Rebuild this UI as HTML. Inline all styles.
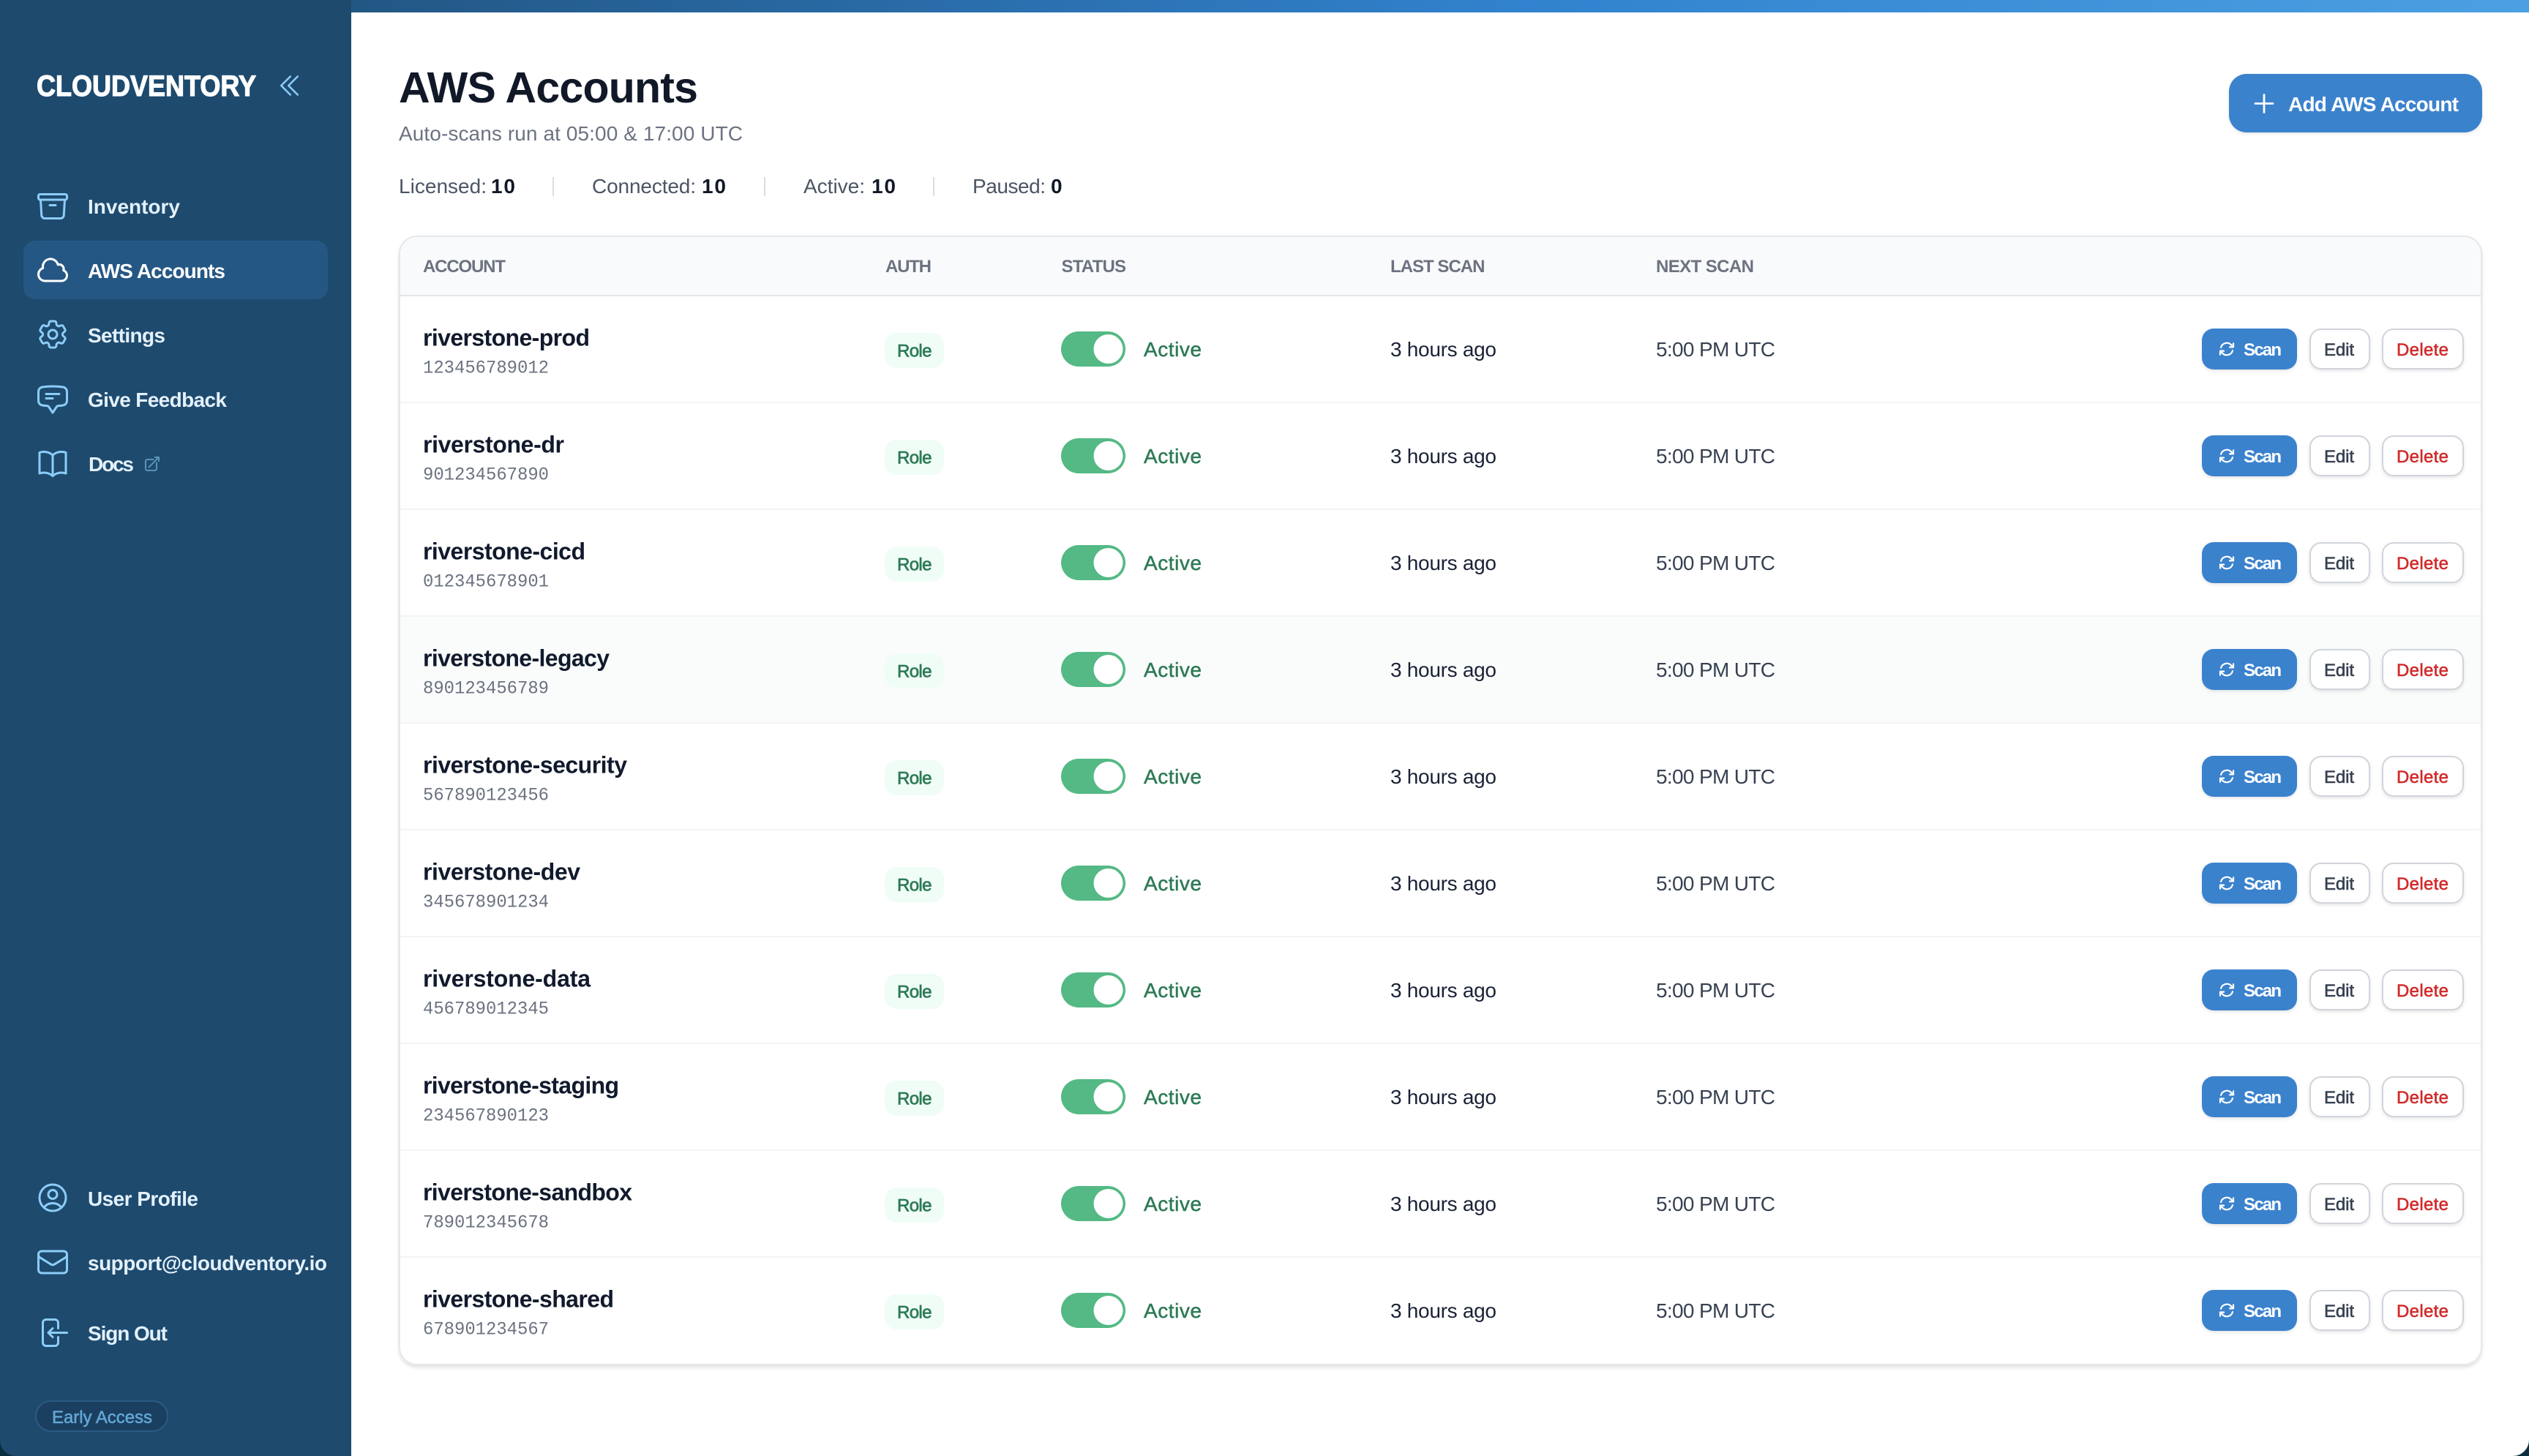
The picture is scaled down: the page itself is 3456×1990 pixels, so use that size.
<!DOCTYPE html>
<html lang="en">
<head>
<meta charset="utf-8">
<title>AWS Accounts</title>
<style>
html,body{margin:0;padding:0;background:#fff;width:3456px;height:1990px;overflow:hidden}
svg{display:block}
text{font-family:"Liberation Sans",sans-serif;white-space:pre}
.nav{font-size:28px;font-weight:700;fill:#e3f1fc}
.ic{fill:none;stroke:#8ccdf8;stroke-width:1.5;stroke-linecap:round;stroke-linejoin:round}
.stat{font-size:28px;fill:#4b5563}
.statb{font-size:28px;font-weight:700;fill:#111827}
.th{font-size:24px;font-weight:700;fill:#6b7280}
.nm{font-size:32px;font-weight:700;fill:#111a2c}
.id{font-family:"Liberation Mono",monospace;font-size:25px;fill:#6b7280}
.role{font-size:24px;font-weight:400;fill:#2d7a55;stroke:#2d7a55;stroke-width:.7}
.act{font-size:28px;fill:#2d7a55;stroke:#2d7a55;stroke-width:.5}
.ls{font-size:28px;fill:#1a2236}
.nx{font-size:28px;fill:#374151}
.sc{font-size:24px;font-weight:700;fill:#fff}
.ed{font-size:24px;fill:#374151;stroke:#374151;stroke-width:.6}
.de{font-size:24px;fill:#d12a2a;stroke:#d12a2a;stroke-width:.6}
</style>
</head>
<body>
<svg xmlns="http://www.w3.org/2000/svg" width="3456" height="1990" viewBox="0 0 3456 1990">
<defs>
<linearGradient id="bar" x1="0" y1="0" x2="3456" y2="0" gradientUnits="userSpaceOnUse">
<stop offset="0" stop-color="#1e4a6e"/><stop offset=".6" stop-color="#3182ce"/><stop offset="1" stop-color="#4ba0e2"/>
</linearGradient>
<filter id="sh" x="-10%" y="-20%" width="120%" height="150%"><feDropShadow dx="0" dy="2" stdDeviation="2" flood-color="#000" flood-opacity=".1"/></filter>
<filter id="sc" x="-2%" y="-2%" width="104%" height="104%"><feDropShadow dx="0" dy="3" stdDeviation="2.5" flood-color="#000" flood-opacity=".12"/></filter>
<g id="rs">
<rect x="1209" y="455" width="81" height="48" rx="16" fill="#f0fdf7"/>
<rect x="1450" y="453" width="88" height="48" rx="24" fill="#54b984"/>
<circle cx="1514.5" cy="477" r="20" fill="#fff"/>
<rect x="3009" y="449" width="130" height="56" rx="16" fill="#3b82cd" filter="url(#sh)"/>
<path transform="translate(3031,465)" d="M16.023 9.348h4.992v-.001M2.985 19.644v-4.992m0 0h4.992m-4.993 0l3.181 3.183a8.25 8.25 0 0013.803-3.7M4.031 9.865a8.25 8.25 0 0113.803-3.7l3.181 3.182m0-4.991v4.99" fill="none" stroke="#fff" stroke-width="2.2" stroke-linecap="round" stroke-linejoin="round"/>
<rect x="3157" y="450" width="81" height="54" rx="15" fill="#fff" stroke="#d1d5db" stroke-width="2" filter="url(#sh)"/>
<rect x="3256" y="450" width="110" height="54" rx="15" fill="#fff" stroke="#d1d5db" stroke-width="2" filter="url(#sh)"/>
</g>
</defs>

<rect width="3456" height="1990" fill="#fff"/>
<rect width="3456" height="17" fill="url(#bar)"/>
<rect width="480" height="1990" fill="#1e4a6e"/>

<!-- sidebar -->
<text x="50" y="131" font-size="40" font-weight="700" fill="#fff" stroke="#fff" stroke-width="1.2" textLength="300" lengthAdjust="spacingAndGlyphs">CLOUDVENTORY</text>
<path transform="translate(375.5,97) scale(1.667)" class="ic" d="M18.75 19.5l-7.5-7.5 7.5-7.5m-6 15L5.25 12l7.5-7.5"/>

<rect x="32" y="329" width="416" height="80" rx="16" fill="#255785"/>

<path transform="translate(48,258) scale(2)" class="ic" d="M20.25 7.5l-.625 10.632a2.25 2.25 0 01-2.247 2.118H6.622a2.25 2.25 0 01-2.247-2.118L3.75 7.5M10 11.25h4M3.375 7.5h17.25c.621 0 1.125-.504 1.125-1.125v-1.5c0-.621-.504-1.125-1.125-1.125H3.375c-.621 0-1.125.504-1.125 1.125v1.5c0 .621.504 1.125 1.125 1.125z"/>
<text class="nav" x="120" y="292" textLength="126">Inventory</text>

<path transform="translate(48,345) scale(2)" class="ic" style="stroke:#fff" d="M2.25 15a4.5 4.5 0 004.5 4.5H18a3.75 3.75 0 001.332-7.257 3 3 0 00-3.758-3.848 5.25 5.25 0 00-10.233 2.33A4.502 4.502 0 002.25 15z"/>
<text class="nav" x="120" y="380" textLength="188" style="fill:#fff">AWS Accounts</text>

<path transform="translate(48,433) scale(2)" class="ic" d="M9.594 3.94c.09-.542.56-.94 1.11-.94h2.593c.55 0 1.02.398 1.11.94l.213 1.281c.063.374.313.686.645.87.074.04.147.083.22.127.324.196.72.257 1.075.124l1.217-.456a1.125 1.125 0 011.37.49l1.296 2.247a1.125 1.125 0 01-.26 1.431l-1.003.827c-.293.24-.438.613-.431.992a6.759 6.759 0 010 .255c-.007.378.138.75.43.99l1.005.828c.424.35.534.954.26 1.43l-1.298 2.247a1.125 1.125 0 01-1.369.491l-1.217-.456c-.355-.133-.75-.072-1.076.124a6.57 6.57 0 01-.22.128c-.331.183-.581.495-.644.869l-.213 1.28c-.09.543-.56.941-1.11.941h-2.594c-.55 0-1.02-.398-1.11-.94l-.213-1.281c-.062-.374-.312-.686-.644-.87a6.52 6.52 0 01-.22-.127c-.325-.196-.72-.257-1.076-.124l-1.217.456a1.125 1.125 0 01-1.369-.49l-1.297-2.247a1.125 1.125 0 01.26-1.431l1.004-.827c.292-.24.437-.613.43-.992a6.932 6.932 0 010-.255c.007-.378-.138-.75-.43-.99l-1.004-.828a1.125 1.125 0 01-.26-1.43l1.297-2.247a1.125 1.125 0 011.37-.491l1.216.456c.356.133.751.072 1.076-.124.072-.044.146-.087.22-.128.332-.183.582-.495.644-.869l.214-1.281zM15 12a3 3 0 11-6 0 3 3 0 016 0z"/>
<text class="nav" x="120" y="468" textLength="106">Settings</text>

<path transform="translate(48,522) scale(2)" class="ic" d="M7.5 8.25h9m-9 3H12m-9.75 1.51c0 1.6 1.123 2.994 2.707 3.227 1.129.166 2.27.293 3.423.379.35.026.67.21.865.501L12 21l2.755-4.133a1.14 1.14 0 01.865-.501 48.172 48.172 0 003.423-.379c1.584-.233 2.707-1.626 2.707-3.228V6.741c0-1.602-1.123-2.995-2.707-3.228A48.394 48.394 0 0012 3c-2.392 0-4.744.175-7.043.513C3.373 3.746 2.25 5.14 2.25 6.741v6.018z"/>
<text class="nav" x="120" y="556" textLength="190">Give Feedback</text>

<path transform="translate(48,610) scale(2)" class="ic" d="M12 6.042A8.967 8.967 0 006 3.75c-1.052 0-2.062.18-3 .512v14.25A8.987 8.987 0 016 18c2.305 0 4.408.867 6 2.292m0-14.25a8.966 8.966 0 016-2.292c1.052 0 2.062.18 3 .512v14.25A8.987 8.987 0 0018 18a8.967 8.967 0 00-6 2.292m0-14.25v14.25"/>
<text class="nav" x="121" y="644" textLength="62">Docs</text>
<path transform="translate(196,622)" d="M13.5 6H5.25A2.25 2.25 0 003 8.25v10.5A2.25 2.25 0 005.25 21h10.5A2.25 2.25 0 0018 18.75V10.5m-10.5 6L21 3m0 0h-5.25M21 3v5.25" fill="none" stroke="#8ccdf8" stroke-opacity=".55" stroke-width="2" stroke-linecap="round" stroke-linejoin="round"/>

<path transform="translate(48,1613) scale(2)" class="ic" d="M17.982 18.725A7.488 7.488 0 0012 15.75a7.488 7.488 0 00-5.982 2.975m11.963 0a9 9 0 10-11.963 0m11.963 0A8.966 8.966 0 0112 21a8.966 8.966 0 01-5.982-2.275M15 9.75a3 3 0 11-6 0 3 3 0 016 0z"/>
<text class="nav" x="120" y="1648" textLength="151">User Profile</text>

<path transform="translate(48,1701) scale(2)" class="ic" d="M21.75 6.75v10.5a2.25 2.25 0 01-2.25 2.25h-15a2.25 2.25 0 01-2.25-2.25V6.75m19.5 0A2.25 2.25 0 0019.5 4.5h-15a2.25 2.25 0 00-2.25 2.25m19.5 0v.243a2.25 2.25 0 01-1.07 1.916l-7.5 4.615a2.25 2.25 0 01-2.36 0L3.32 8.91a2.25 2.25 0 01-1.07-1.916V6.75"/>
<text class="nav" x="120" y="1736" textLength="327">support@cloudventory.io</text>

<path transform="translate(48,1797.5) scale(2)" class="ic" d="M15.75 9V5.25A2.25 2.25 0 0013.5 3h-6a2.25 2.25 0 00-2.25 2.25v13.5A2.25 2.25 0 007.5 21h6a2.25 2.25 0 002.25-2.25V15M12 9l-3 3m0 0l3 3m-3-3h12.75"/>
<text class="nav" x="120" y="1832" textLength="109">Sign Out</text>

<rect x="49" y="1915" width="180" height="41" rx="20.5" fill="#1b3f60" stroke="#2b5a85" stroke-width="2"/>
<text x="71" y="1945" font-size="24" fill="#63a8d6" stroke="#63a8d6" stroke-width=".5" textLength="137">Early Access</text>

<!-- corners -->
<path d="M0 1968A22 22 0 0 0 22 1990H0Z" fill="#0a3040"/>
<path d="M3456 1968A22 22 0 0 1 3434 1990H3456Z" fill="#0a3040"/>

<!-- header -->
<text x="545" y="140" font-size="59" font-weight="700" fill="#111827" textLength="409">AWS Accounts</text>
<text x="545" y="192" font-size="28" fill="#6b7280" textLength="470">Auto-scans run at 05:00 &amp; 17:00 UTC</text>

<text class="stat" x="545" y="264" textLength="120">Licensed:</text>
<text class="statb" x="671" y="264" textLength="33">10</text>
<rect x="755" y="242" width="2" height="26" fill="#d9dde3"/>
<text class="stat" x="809" y="264" textLength="142">Connected:</text>
<text class="statb" x="959" y="264" textLength="33">10</text>
<rect x="1044" y="242" width="2" height="26" fill="#d9dde3"/>
<text class="stat" x="1098" y="264" textLength="84">Active:</text>
<text class="statb" x="1191" y="264" textLength="33">10</text>
<rect x="1275" y="242" width="2" height="26" fill="#d9dde3"/>
<text class="stat" x="1329" y="264" textLength="100">Paused:</text>
<text class="statb" x="1436" y="264" textLength="16">0</text>

<rect x="3046" y="101" width="346" height="80" rx="24" fill="#3b82cd" filter="url(#sh)"/>
<path d="M3094 129.5v24M3082 141.5h24" stroke="#fff" stroke-width="2.8" stroke-linecap="round" fill="none"/>
<text x="3127" y="152" font-size="28" font-weight="700" fill="#fff" textLength="233">Add AWS Account</text>

<!-- card -->
<rect x="546" y="323" width="2845" height="1542" rx="24" fill="#fff" stroke="#e5e7eb" stroke-width="2" filter="url(#sc)"/>
<path d="M547 403V347A23 23 0 0 1 570 324H3367A23 23 0 0 1 3390 347V403Z" fill="#f9fafb"/>
<rect x="547" y="403" width="2843" height="2" fill="#e5e7eb"/>
<rect x="547" y="843" width="2843" height="144" fill="#fafcfc"/>
<rect x="547" y="549" width="2843" height="2" fill="#f3f4f6"/>
<rect x="547" y="695" width="2843" height="2" fill="#f3f4f6"/>
<rect x="547" y="841" width="2843" height="2" fill="#f3f4f6"/>
<rect x="547" y="987" width="2843" height="2" fill="#f3f4f6"/>
<rect x="547" y="1133" width="2843" height="2" fill="#f3f4f6"/>
<rect x="547" y="1279" width="2843" height="2" fill="#f3f4f6"/>
<rect x="547" y="1425" width="2843" height="2" fill="#f3f4f6"/>
<rect x="547" y="1571" width="2843" height="2" fill="#f3f4f6"/>
<rect x="547" y="1717" width="2843" height="2" fill="#f3f4f6"/>

<text class="th" x="578" y="372" textLength="113">ACCOUNT</text>
<text class="th" x="1210" y="372" textLength="63">AUTH</text>
<text class="th" x="1450.5" y="372" textLength="88.5">STATUS</text>
<text class="th" x="1900" y="372" textLength="129.5">LAST SCAN</text>
<text class="th" x="2263" y="372" textLength="134">NEXT SCAN</text>

<!-- rows -->
<g>
<use href="#rs"/>
<text class="nm" x="578" y="472.5" textLength="228">riverstone-prod</text>
<text class="id" x="578" y="509.5" textLength="172" lengthAdjust="spacingAndGlyphs">123456789012</text>
<text class="role" x="1226" y="487.5" textLength="47.5">Role</text>
<text class="act" x="1563" y="487" textLength="79">Active</text>
<text class="ls" x="1900" y="487" textLength="145">3 hours ago</text>
<text class="nx" x="2263" y="487" textLength="163">5:00 PM UTC</text>
<text class="sc" x="3066" y="486" textLength="52">Scan</text>
<text class="ed" x="3176" y="486" textLength="41">Edit</text>
<text class="de" x="3275" y="486" textLength="71">Delete</text>
</g>
<g transform="translate(0,146)">
<use href="#rs"/>
<text class="nm" x="578" y="472.5" textLength="193">riverstone-dr</text>
<text class="id" x="578" y="509.5" textLength="172" lengthAdjust="spacingAndGlyphs">901234567890</text>
<text class="role" x="1226" y="487.5" textLength="47.5">Role</text>
<text class="act" x="1563" y="487" textLength="79">Active</text>
<text class="ls" x="1900" y="487" textLength="145">3 hours ago</text>
<text class="nx" x="2263" y="487" textLength="163">5:00 PM UTC</text>
<text class="sc" x="3066" y="486" textLength="52">Scan</text>
<text class="ed" x="3176" y="486" textLength="41">Edit</text>
<text class="de" x="3275" y="486" textLength="71">Delete</text>
</g>
<g transform="translate(0,292)">
<use href="#rs"/>
<text class="nm" x="578" y="472.5" textLength="222">riverstone-cicd</text>
<text class="id" x="578" y="509.5" textLength="172" lengthAdjust="spacingAndGlyphs">012345678901</text>
<text class="role" x="1226" y="487.5" textLength="47.5">Role</text>
<text class="act" x="1563" y="487" textLength="79">Active</text>
<text class="ls" x="1900" y="487" textLength="145">3 hours ago</text>
<text class="nx" x="2263" y="487" textLength="163">5:00 PM UTC</text>
<text class="sc" x="3066" y="486" textLength="52">Scan</text>
<text class="ed" x="3176" y="486" textLength="41">Edit</text>
<text class="de" x="3275" y="486" textLength="71">Delete</text>
</g>
<g transform="translate(0,438)">
<use href="#rs"/>
<text class="nm" x="578" y="472.5" textLength="255">riverstone-legacy</text>
<text class="id" x="578" y="509.5" textLength="172" lengthAdjust="spacingAndGlyphs">890123456789</text>
<text class="role" x="1226" y="487.5" textLength="47.5">Role</text>
<text class="act" x="1563" y="487" textLength="79">Active</text>
<text class="ls" x="1900" y="487" textLength="145">3 hours ago</text>
<text class="nx" x="2263" y="487" textLength="163">5:00 PM UTC</text>
<text class="sc" x="3066" y="486" textLength="52">Scan</text>
<text class="ed" x="3176" y="486" textLength="41">Edit</text>
<text class="de" x="3275" y="486" textLength="71">Delete</text>
</g>
<g transform="translate(0,584)">
<use href="#rs"/>
<text class="nm" x="578" y="472.5" textLength="279">riverstone-security</text>
<text class="id" x="578" y="509.5" textLength="172" lengthAdjust="spacingAndGlyphs">567890123456</text>
<text class="role" x="1226" y="487.5" textLength="47.5">Role</text>
<text class="act" x="1563" y="487" textLength="79">Active</text>
<text class="ls" x="1900" y="487" textLength="145">3 hours ago</text>
<text class="nx" x="2263" y="487" textLength="163">5:00 PM UTC</text>
<text class="sc" x="3066" y="486" textLength="52">Scan</text>
<text class="ed" x="3176" y="486" textLength="41">Edit</text>
<text class="de" x="3275" y="486" textLength="71">Delete</text>
</g>
<g transform="translate(0,730)">
<use href="#rs"/>
<text class="nm" x="578" y="472.5" textLength="215">riverstone-dev</text>
<text class="id" x="578" y="509.5" textLength="172" lengthAdjust="spacingAndGlyphs">345678901234</text>
<text class="role" x="1226" y="487.5" textLength="47.5">Role</text>
<text class="act" x="1563" y="487" textLength="79">Active</text>
<text class="ls" x="1900" y="487" textLength="145">3 hours ago</text>
<text class="nx" x="2263" y="487" textLength="163">5:00 PM UTC</text>
<text class="sc" x="3066" y="486" textLength="52">Scan</text>
<text class="ed" x="3176" y="486" textLength="41">Edit</text>
<text class="de" x="3275" y="486" textLength="71">Delete</text>
</g>
<g transform="translate(0,876)">
<use href="#rs"/>
<text class="nm" x="578" y="472.5" textLength="229">riverstone-data</text>
<text class="id" x="578" y="509.5" textLength="172" lengthAdjust="spacingAndGlyphs">456789012345</text>
<text class="role" x="1226" y="487.5" textLength="47.5">Role</text>
<text class="act" x="1563" y="487" textLength="79">Active</text>
<text class="ls" x="1900" y="487" textLength="145">3 hours ago</text>
<text class="nx" x="2263" y="487" textLength="163">5:00 PM UTC</text>
<text class="sc" x="3066" y="486" textLength="52">Scan</text>
<text class="ed" x="3176" y="486" textLength="41">Edit</text>
<text class="de" x="3275" y="486" textLength="71">Delete</text>
</g>
<g transform="translate(0,1022)">
<use href="#rs"/>
<text class="nm" x="578" y="472.5" textLength="268">riverstone-staging</text>
<text class="id" x="578" y="509.5" textLength="172" lengthAdjust="spacingAndGlyphs">234567890123</text>
<text class="role" x="1226" y="487.5" textLength="47.5">Role</text>
<text class="act" x="1563" y="487" textLength="79">Active</text>
<text class="ls" x="1900" y="487" textLength="145">3 hours ago</text>
<text class="nx" x="2263" y="487" textLength="163">5:00 PM UTC</text>
<text class="sc" x="3066" y="486" textLength="52">Scan</text>
<text class="ed" x="3176" y="486" textLength="41">Edit</text>
<text class="de" x="3275" y="486" textLength="71">Delete</text>
</g>
<g transform="translate(0,1168)">
<use href="#rs"/>
<text class="nm" x="578" y="472.5" textLength="286">riverstone-sandbox</text>
<text class="id" x="578" y="509.5" textLength="172" lengthAdjust="spacingAndGlyphs">789012345678</text>
<text class="role" x="1226" y="487.5" textLength="47.5">Role</text>
<text class="act" x="1563" y="487" textLength="79">Active</text>
<text class="ls" x="1900" y="487" textLength="145">3 hours ago</text>
<text class="nx" x="2263" y="487" textLength="163">5:00 PM UTC</text>
<text class="sc" x="3066" y="486" textLength="52">Scan</text>
<text class="ed" x="3176" y="486" textLength="41">Edit</text>
<text class="de" x="3275" y="486" textLength="71">Delete</text>
</g>
<g transform="translate(0,1314)">
<use href="#rs"/>
<text class="nm" x="578" y="472.5" textLength="261">riverstone-shared</text>
<text class="id" x="578" y="509.5" textLength="172" lengthAdjust="spacingAndGlyphs">678901234567</text>
<text class="role" x="1226" y="487.5" textLength="47.5">Role</text>
<text class="act" x="1563" y="487" textLength="79">Active</text>
<text class="ls" x="1900" y="487" textLength="145">3 hours ago</text>
<text class="nx" x="2263" y="487" textLength="163">5:00 PM UTC</text>
<text class="sc" x="3066" y="486" textLength="52">Scan</text>
<text class="ed" x="3176" y="486" textLength="41">Edit</text>
<text class="de" x="3275" y="486" textLength="71">Delete</text>
</g>
</svg>
</body>
</html>
